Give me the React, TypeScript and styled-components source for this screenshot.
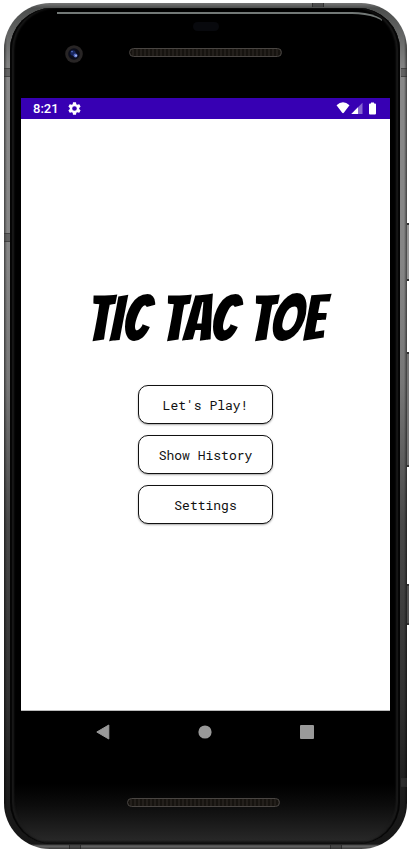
import React from "react";
import styled, { createGlobalStyle } from "styled-components";

const GlobalStyle = createGlobalStyle`
  *, *::before, *::after { box-sizing: border-box; }
  body { margin: 0; background: #fff; font-family: Roboto, "Liberation Sans", sans-serif; }
`;

const Page = styled.div`
  min-height: 100vh;
  display: flex;
  padding: 3px 2px 4px 4px;
`;

const Phone = styled.div`
  position: relative;
  flex: 1;
  display: flex;
  padding: 5px 7px 5px 6px;
  border-radius: 46px;
  background: linear-gradient(90deg, rgba(0, 0, 0, 0.5) 0, transparent 3px, transparent calc(100% - 3px), rgba(0, 0, 0, 0.5) 100%),
    linear-gradient(#777 0, #4c4e4d 5px, #888 70px, #858585 260px, #777 380px, #484848 520px, #303030 700px, #1c1c1c 790px, #161616 calc(100% - 5px), #666 calc(100% - 3px), #3c3c3c 100%);
`;

const Glass = styled.div`
  flex: 1;
  min-width: 0;
  display: flex;
  flex-direction: column;
  padding: 0 10px 0 11px;
  border-radius: 42px;
  background: linear-gradient(#000 0, #000 calc(100% - 60px), #0b0b0b calc(100% - 40px), #272727 calc(100% - 4px), #080808 100%);
  box-shadow: inset 2px 0 1px #050505, inset 4px 0 2px #1c1c1c, inset -2px 0 1px #050505,
    inset -4px 0 2px #1c1c1c;
`;

const TopBezel = styled.header`
  position: relative;
  height: 90px;
  flex: none;
  display: flex;
  flex-direction: column;
  align-items: center;
  gap: 17px;
  padding-top: 14px;
`;

const GlassShine = styled.div`
  position: absolute;
  top: 4px;
  left: 36px;
  right: 4px;
  height: 14px;
  border-top: 2px solid #727876;
  border-right: 1px solid transparent;
  border-top-right-radius: 34px 14px;
`;

const Sensor = styled.div`
  width: 26px;
  height: 9px;
  border-radius: 5px;
  background: #08090d;
`;

const Grille = styled.div`
  width: 153px;
  height: 9px;
  border: 1px solid #4a4643;
  border-radius: 5px;
  background: repeating-linear-gradient(90deg, #16130f 0, #16130f 2px, #231f1b 2px, #231f1b 4px);
`;

const Lens = styled.svg`
  position: absolute;
  top: 37px;
  left: 44px;
`;

const Screen = styled.main`
  flex: 1;
  display: flex;
  flex-direction: column;
  background: #fff;
  border-bottom: 1px solid #bbb;
`;

const StatusBar = styled.div`
  height: 21px;
  display: flex;
  align-items: center;
  gap: 9px;
  padding: 0 13px 0 12px;
  background: #3700b3;
  color: #fff;
`;

const Clock = styled.time`
  font-size: 13px;
  font-weight: 500;
  line-height: 21px;
`;

const StatusIcons = styled.svg`
  margin-left: auto;
`;

const Menu = styled.div`
  flex: 1;
  display: flex;
  flex-direction: column;
  align-items: center;
  justify-content: center;
  padding-bottom: 18px;
`;

const Title = styled.h1`
  margin: 0 0 34px;
  font-family: Bangers, "Liberation Sans Narrow", "Liberation Sans", sans-serif;
  font-size: 64px;
  font-weight: 400;
  line-height: 64px;
  white-space: nowrap;
  color: #000;
`;

const Actions = styled.nav`
  display: flex;
  flex-direction: column;
  gap: 11px;
`;

const MenuButton = styled.button`
  width: 135px;
  height: 39px;
  padding: 0;
  border: 1px solid #111;
  border-radius: 10px;
  background: #fff;
  box-shadow: 0 1px 2px rgba(0, 0, 0, 0.35);
  color: #111;
  font-family: "Roboto Mono", "DejaVu Sans Mono", "Liberation Mono", monospace;
  font-size: 13px;
  line-height: 20px;
`;

const NavBar = styled.nav`
  height: 42px;
  flex: none;
  display: flex;
  justify-content: center;
  gap: 78px;
  padding-right: 2px;
`;

const NavButton = styled.button`
  width: 24px;
  height: 42px;
  display: grid;
  place-items: center;
  padding: 0;
  border: 0;
  background: transparent;
`;

const BottomBezel = styled.footer`
  height: 91px;
  flex: none;
  display: flex;
  justify-content: center;
  align-items: flex-start;
  padding: 45px 4px 0 0;
`;

const SideKey = styled.div<{ $top: number; $height: number; $color: string }>`
  position: absolute;
  right: -2px;
  top: ${(p) => p.$top}%;
  width: 2px;
  height: ${(p) => p.$height}px;
  background: ${(p) => p.$color};
  border-top: 2px solid #333;
  border-bottom: 2px solid #333;
`;

const Antenna = styled.div<{ $side: "left" | "right"; $top: number }>`
  position: absolute;
  ${(p) => p.$side}: 0;
  top: ${(p) => p.$top}%;
  width: 6px;
  height: 9px;
  border: solid rgba(40, 40, 40, 0.5);
  border-width: 1px 0;
  background: rgba(60, 60, 60, 0.5);
`;

const EdgeBand = styled.div<{ $edge: "top" | "bottom"; $left: number }>`
  position: absolute;
  ${(p) => p.$edge}: 0;
  left: ${(p) => p.$left}%;
  width: 12px;
  height: 4px;
  border: solid rgba(30, 30, 30, 0.6);
  border-width: 0 1px;
  background: rgba(50, 50, 50, 0.5);
`;

export default function App() {
  return (
    <>
      <GlobalStyle />
      <Page>
        <Phone>
          <Antenna $side="left" $top={7.7} />
          <Antenna $side="right" $top={7.7} />
          <Antenna $side="left" $top={27.2} />
          <Antenna $side="right" $top={91.6} />
          <EdgeBand $edge="top" $left={76.5} />
          <EdgeBand $edge="bottom" $left={16.2} />
          <EdgeBand $edge="bottom" $left={81} />
          <SideKey $top={26} $height={58} $color="#999" />
          <SideKey $top={41.2} $height={115} $color="#777" />
          <SideKey $top={68.7} $height={41} $color="#555" />
          <Glass>
            <TopBezel>
              <GlassShine />
              <Lens width="18" height="18" viewBox="0 0 18 18" aria-hidden="true">
                <circle cx="9" cy="9" r="8.8" fill="#282525" />
                <circle cx="9" cy="9" r="5.8" fill="#0b0d1b" />
                <circle cx="8" cy="8" r="2.7" fill="#17255f" />
                <circle cx="10.5" cy="10.5" r="2" fill="#5268be" />
                <circle cx="11" cy="10.7" r="0.9" fill="#b3c6ff" />
                <circle cx="7" cy="6.6" r="0.8" fill="#5876c5" />
              </Lens>
              <Sensor />
              <Grille />
            </TopBezel>
            <Screen>
              <StatusBar>
                <Clock>8:21</Clock>
                <svg width="13" height="13" viewBox="2 2 20 20" fill="#fff" aria-hidden="true">
                  <path d="M19.14 12.94c.04-.3.06-.61.06-.94 0-.32-.02-.64-.07-.94l2.03-1.58a.49.49 0 0 0 .12-.61l-1.92-3.32a.49.49 0 0 0-.59-.22l-2.39.96a7 7 0 0 0-1.62-.94l-.36-2.54a.48.48 0 0 0-.48-.41h-3.84a.47.47 0 0 0-.47.41l-.36 2.54c-.59.24-1.13.57-1.62.94l-2.39-.96a.48.48 0 0 0-.59.22L2.74 8.87a.47.47 0 0 0 .12.61l2.03 1.58a7.6 7.6 0 0 0-.02 1.88l-2.03 1.58a.49.49 0 0 0-.12.61l1.92 3.32c.12.22.37.29.59.22l2.39-.96c.5.38 1.03.7 1.62.94l.36 2.54c.05.24.24.41.48.41h3.84c.24 0 .44-.17.47-.41l.36-2.54a7 7 0 0 0 1.62-.94l2.39.96c.22.08.47 0 .59-.22l1.92-3.32a.47.47 0 0 0-.12-.61zM12 15.6a3.6 3.6 0 1 1 0-7.2 3.6 3.6 0 0 1 0 7.2z" />
                </svg>
                <StatusIcons width="41" height="13" viewBox="0 0 41 13" fill="#fff" aria-hidden="true">
                  <path d="M.5 3.200Q7-2.500 13.500 3.200L8 10.500Q7 12 6 10.500Z" />
                  <path d="M26.500 .8V12H15.300Z" opacity=".4" />
                  <path d="M22 5.300V12H15.300Z" />
                  <path d="M35 1.500V.4H38V1.500H39Q40 1.500 40 2.500V11.500Q40 12.500 39 12.500H34Q33 12.500 33 11.500V2.500Q33 1.500 34 1.500Z" />
                </StatusIcons>
              </StatusBar>
              <Menu>
                <Title>TIC TAC TOE</Title>
                <Actions>
                  <MenuButton type="button">Let's Play!</MenuButton>
                  <MenuButton type="button">Show History</MenuButton>
                  <MenuButton type="button">Settings</MenuButton>
                </Actions>
              </Menu>
            </Screen>
            <NavBar aria-label="System">
              <NavButton type="button" aria-label="Back">
                <svg width="14" height="16" viewBox="0 0 14 16">
                  <path d="M12.800 1V15L.8 8Z" fill="#999" stroke="#999" strokeLinejoin="round" />
                </svg>
              </NavButton>
              <NavButton type="button" aria-label="Home">
                <svg width="14" height="14" viewBox="0 0 14 14">
                  <circle cx="7" cy="7" r="6.600" fill="#999" />
                </svg>
              </NavButton>
              <NavButton type="button" aria-label="Recent apps">
                <svg width="14" height="14" viewBox="0 0 14 14">
                  <rect width="14" height="14" rx="1" fill="#999" />
                </svg>
              </NavButton>
            </NavBar>
            <BottomBezel>
              <Grille />
            </BottomBezel>
          </Glass>
        </Phone>
      </Page>
    </>
  );
}
